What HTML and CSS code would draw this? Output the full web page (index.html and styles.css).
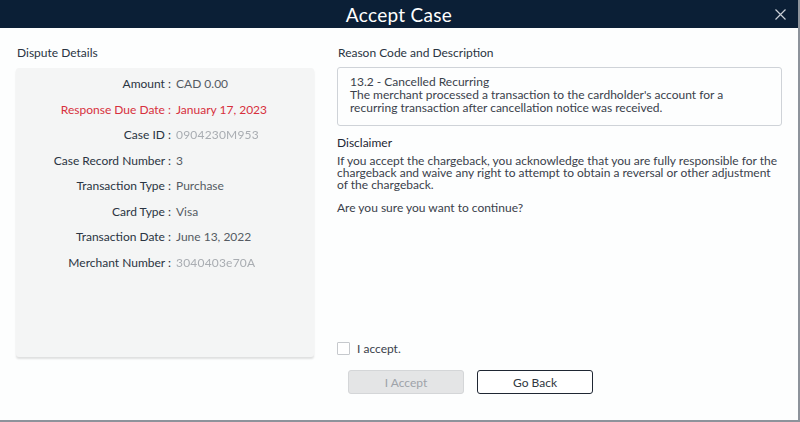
FILE: index.html
```
<!DOCTYPE html>
<html>
<head>
<meta charset="utf-8">
<link rel="stylesheet" href="styles.css">
</head>
<body>
<div class="modal">
  <div class="header">
    <div class="title">Accept Case</div>
    <svg class="close" width="11" height="11" viewBox="0 0 11 11"><path d="M0.5 0.5L10.5 10.5M10.5 0.5L0.5 10.5" stroke="#c9ced6" stroke-width="1.2"/></svg>
  </div>
  <div class="body">
    <div class="left">
      <div class="section-title">Dispute Details</div>
      <div class="details">
        <div class="row"><span class="lab">Amount :</span><span class="val">CAD 0.00</span></div>
        <div class="row red"><span class="lab">Response Due Date :</span><span class="val">January 17, 2023</span></div>
        <div class="row"><span class="lab">Case ID :</span><span class="val blur">0904230M953</span></div>
        <div class="row"><span class="lab">Case Record Number :</span><span class="val">3</span></div>
        <div class="row"><span class="lab">Transaction Type :</span><span class="val">Purchase</span></div>
        <div class="row"><span class="lab">Card Type :</span><span class="val">Visa</span></div>
        <div class="row"><span class="lab">Transaction Date :</span><span class="val">June 13, 2022</span></div>
        <div class="row"><span class="lab">Merchant Number :</span><span class="val blur">3040403e70A</span></div>
      </div>
    </div>
    <div class="right">
      <div class="section-title">Reason Code and Description</div>
      <div class="reason">
        <div class="code">13.2 - Cancelled Recurring</div>
        <div class="desc">The merchant processed a transaction to the cardholder's account for a recurring transaction after cancellation notice was received.</div>
      </div>
      <div class="disc-title">Disclaimer</div>
      <p class="disc">If you accept the chargeback, you acknowledge that you are fully responsible for the chargeback and waive any right to attempt to obtain a reversal or other adjustment of the chargeback.</p>
      <p class="disc sure">Are you sure you want to continue?</p>
      <div class="spacer"></div>
      <label class="check"><span class="box"></span>I accept.</label>
      <div class="buttons">
        <button class="btn disabled">I Accept</button>
        <button class="btn back">Go Back</button>
      </div>
    </div>
  </div>
</div>
</body>
</html>
```
FILE: styles.css
```
html, body { margin: 0; padding: 0; background: #fff; }
body { font-family: Lato, "Open Sans", sans-serif; color: #2b3340; }
.modal {
  width: 800px; height: 422px; box-sizing: border-box;
  border-right: 2px solid #8d939b; border-bottom: 2px solid #8d939b;
  display: flex; flex-direction: column; background: #fdfefe;
}
.header {
  height: 28px; background: #0b1f36; position: relative;
  display: flex; align-items: center; justify-content: center;
  flex-shrink: 0;
}
.title { color: #fff; font-size: 19px; letter-spacing: 0.3px; margin-left: 0; }
.close { position: absolute; right: 12px; top: 9px; }
.body { flex: 1; display: flex; padding: 18px 16px 0 16px; gap: 23px; }
.left { width: 298px; display: flex; flex-direction: column; }
.section-title { font-size: 12px; color: #2a3442; height: 14px; line-height: 14px; margin-left: 1px; }
.details {
  margin-top: 8px; height: 289px; box-sizing: border-box;
  background: #f4f5f5; border-radius: 3px;
  box-shadow: 0 2px 2px rgba(0,0,0,0.12);
  padding-top: 3px;
}
.row { display: flex; height: 25.5px; align-items: center; font-size: 12px; }
.lab { width: 155px; text-align: right; color: #2a3442; flex-shrink: 0; }
.val { margin-left: 5px; color: #555b63; }
.red .lab, .red .val { color: #d7303d; }
.blur { color: #a9adb2; filter: blur(0.6px); letter-spacing: 0.2px; }
.right { width: 445px; display: flex; flex-direction: column; }
.reason {
  margin-top: 7px; border: 1px solid #cfd3d8; border-radius: 3px;
  height: 59px; box-sizing: border-box; padding: 7px 40px 0 12px;
  font-size: 12px; line-height: 13px; color: #3a414b;
}
.disc-title { font-size: 12px; color: #1e2734; margin-top: 10px; line-height: 14px; }
.disc { margin: 5px 0 0 0; font-size: 12px; line-height: 12.2px; color: #3a414b; }
.sure { margin-top: 10px; }
.spacer { flex: 1; }
.check { display: flex; align-items: center; font-size: 12px; color: #3a414b; height: 13px; margin-top: -1px; line-height: 13px; }
.box { width: 11px; height: 11px; border: 1px solid #c6c9cd; border-radius: 1px; margin-right: 7px; background: #fff; }
.buttons { display: flex; gap: 13px; padding-left: 11px; margin-top: 15px; margin-bottom: 26px; }
.btn {
  width: 116px; height: 24px; font-family: Lato, sans-serif; font-size: 12px;
  border-radius: 3px; box-sizing: border-box;
}
.disabled { background: #e4e5e6; border: 1px solid #d4d6d8; color: #9ea3a9; }
.back { background: #fff; border: 1px solid #1f2733; color: #2f3640; }
```
